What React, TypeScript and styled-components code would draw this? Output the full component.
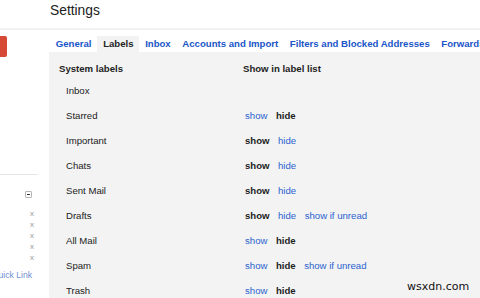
import React from "react";
import styled, { createGlobalStyle } from "styled-components";

const GlobalStyle = createGlobalStyle`
  html, body {
    margin: 0;
    padding: 0;
    background: #fff;
    font-family: "Liberation Sans", Arial, sans-serif;
  }
`;

const Page = styled.div`
  position: relative;
  width: 480px;
  height: 298px;
  overflow: hidden;
  background: #fff;
`;

const Header = styled.div`
  height: 28px;
  border-bottom: 2px solid #f2f2f2;
  box-sizing: content-box;
`;

const Title = styled.div`
  padding: 3px 0 0 50px;
  font-size: 13.8px;
  line-height: 16px;
  color: #222;
`;

const Body = styled.div`
  display: flex;
  height: 268px;
`;

const Sidebar = styled.div`
  width: 49px;
  flex-shrink: 0;
  display: flex;
  flex-direction: column;
  align-items: flex-end;
  overflow: hidden;
`;

const Compose = styled.div`
  align-self: flex-start;
  margin-top: 6px;
  width: 7px;
  height: 21px;
  background: #d64937;
  border-radius: 0 2px 2px 0;
`;

const Divider = styled.div`
  align-self: flex-start;
  margin-top: 117px;
  width: 38px;
  height: 1px;
  background: #e6e6e6;
`;

const Collapse = styled.div`
  margin: 16px 17px 0 0;
  width: 5px;
  height: 5px;
  border: 1px solid #b5b5b5;
  border-radius: 1px;
  display: flex;
  align-items: center;
  justify-content: center;
  &::after {
    content: "";
    width: 3px;
    height: 1px;
    background: #333;
  }
`;

const Removes = styled.div`
  margin: 10px 15px 0 0;
  display: flex;
  flex-direction: column;
  align-items: center;
`;

const Remove = styled.span`
  font-size: 8px;
  line-height: 11px;
  height: 11px;
  color: #9a9a9a;
`;

const QuickLink = styled.div`
  margin: 7px 17px 0 0;
  white-space: nowrap;
  font-size: 8.6px;
  line-height: 11px;
  color: #6f8fd3;
`;

const Main = styled.div`
  flex: 1;
  display: flex;
  flex-direction: column;
`;

const Tabs = styled.div`
  display: flex;
  margin-top: 6px;
  height: 16px;
  padding-left: 1px;
  white-space: nowrap;
`;

const Tab = styled.div<{ $active?: boolean }>`
  padding: 0 5.8px;
  font-size: 9.6px;
  font-weight: bold;
  line-height: 16px;
  color: ${(p) => (p.$active ? "#222" : "#1a55c8")};
  background: ${(p) => (p.$active ? "#f3f3f3" : "transparent")};
`;

const Panel = styled.div`
  flex: 1;
  background: #f3f3f3;
  padding: 10px 0 0 10px;
`;

const Grid = styled.div`
  display: grid;
  grid-template-columns: 184px 1fr;
  grid-auto-rows: 25px;
  grid-template-rows: 15.5px;
  font-size: 9.6px;
  color: #222;
`;

const HeadCell = styled.div`
  font-weight: bold;
  line-height: 14px;
`;

const LabelCell = styled.div`
  padding-left: 7px;
  line-height: 25px;
`;

const Options = styled.div`
  display: flex;
  gap: 8.5px;
  padding-left: 2px;
  line-height: 25px;
`;

const Option = styled.span<{ $on?: boolean }>`
  font-weight: ${(p) => (p.$on ? "bold" : "normal")};
  color: ${(p) => (p.$on ? "#222" : "#2a62cf")};
`;

const Watermark = styled.div`
  position: absolute;
  left: 407px;
  top: 280px;
  font-family: "DejaVu Sans", sans-serif;
  font-size: 11px;
  line-height: 13px;
  color: #111;
`;

type Row = { name: string; show?: boolean; unread?: boolean; none?: boolean };

const rows: Row[] = [
  { name: "Inbox", none: true },
  { name: "Starred", show: false },
  { name: "Important", show: true },
  { name: "Chats", show: true },
  { name: "Sent Mail", show: true },
  { name: "Drafts", show: true, unread: true },
  { name: "All Mail", show: false },
  { name: "Spam", show: false, unread: true },
  { name: "Trash", show: false },
];

const tabs = [
  "General",
  "Labels",
  "Inbox",
  "Accounts and Import",
  "Filters and Blocked Addresses",
  "Forwarding and POP/IMAP",
];

export default function App() {
  return (
    <Page>
      <GlobalStyle />
      <Header>
        <Title>Settings</Title>
      </Header>
      <Body>
        <Sidebar>
          <Compose />
          <Divider />
          <Collapse />
          <Removes>
            {[0, 1, 2, 3, 4].map((i) => (
              <Remove key={i}>x</Remove>
            ))}
          </Removes>
          <QuickLink>Add a Quick Link</QuickLink>
        </Sidebar>
        <Main>
          <Tabs>
            {tabs.map((t) => (
              <Tab key={t} $active={t === "Labels"}>
                {t}
              </Tab>
            ))}
          </Tabs>
          <Panel>
            <Grid>
              <HeadCell>System labels</HeadCell>
              <HeadCell>Show in label list</HeadCell>
              {rows.map((r) => (
                <React.Fragment key={r.name}>
                  <LabelCell>{r.name}</LabelCell>
                  <Options>
                    {!r.none && (
                      <>
                        <Option $on={r.show}>show</Option>
                        <Option $on={!r.show}>hide</Option>
                        {r.unread && <Option>show if unread</Option>}
                      </>
                    )}
                  </Options>
                </React.Fragment>
              ))}
            </Grid>
          </Panel>
        </Main>
      </Body>
      <Watermark>wsxdn.com</Watermark>
    </Page>
  );
}
